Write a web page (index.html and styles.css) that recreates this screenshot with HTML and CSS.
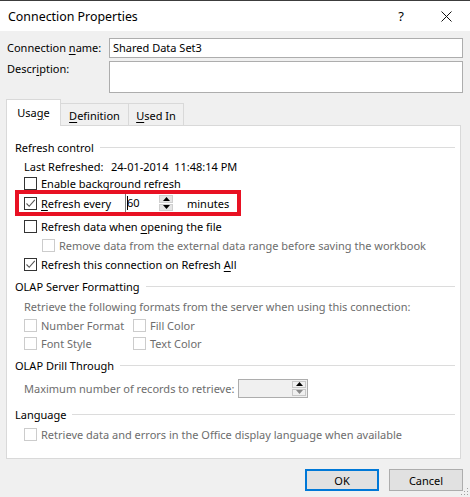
FILE: index.html
```html
<!DOCTYPE html>
<html>
<head>
<meta charset="utf-8">
<link rel="stylesheet" href="styles.css">
</head>
<body>
<div class="window">
  <div class="titlebar">
    <div class="title">Connection Properties</div>
    <div class="tb-btn help">?</div>
    <div class="tb-btn close">
      <svg width="11" height="11" viewBox="0 0 11 11"><path d="M0.5 0.5 L10.5 10.5 M10.5 0.5 L0.5 10.5" stroke="#111" stroke-width="1" fill="none"/></svg>
    </div>
  </div>
  <div class="content">
    <div class="field-row">
      <label class="field-label">Connection <u>n</u>ame:</label>
      <div class="input">Shared Data Set3</div>
    </div>
    <div class="field-row desc-row">
      <label class="field-label">Descr<u>i</u>ption:</label>
      <div class="input textarea"></div>
    </div>

    <div class="tabs">
      <div class="tab active">Usa<u>g</u>e</div>
      <div class="tab tab-def"><u>D</u>efinition</div>
      <div class="tab tab-used"><u>U</u>sed In</div>
    </div>
    <div class="panel">
      <div class="legend">Refresh control<span class="rule"></span></div>
      <div class="row indent r-last">
        <span class="last-label">Last Refreshed:</span><span>24-01-2014&nbsp; 11:48:14 PM</span>
      </div>
      <div class="row indent r-enable">
        <span class="cb"></span><span>Enable back<u>g</u>round refresh</span>
      </div>
      <div class="redbox">
        <span class="cb checked"><svg width="11" height="11" viewBox="0 0 11 11"><path d="M1.5 5.5 L4.2 8.3 L9.8 1.8" stroke="#555" stroke-width="1.1" fill="none"/></svg></span>
        <span class="every-label"><u>R</u>efresh every</span>
        <span class="spin">
          <span class="spin-input"><span class="caret"></span>60</span>
          <span class="spin-btns">
            <span class="sb up"><svg width="7" height="4" viewBox="0 0 7 4"><path d="M0 4 L3.5 0 L7 4Z" fill="#000"/></svg></span>
            <span class="sb down"><svg width="7" height="4" viewBox="0 0 7 4"><path d="M0 0 L3.5 4 L7 0Z" fill="#000"/></svg></span>
          </span>
        </span>
        <span class="minutes">minutes</span>
      </div>
      <div class="row indent r-open">
        <span class="cb"></span><span>Refresh data when <u>o</u>pening the file</span>
      </div>
      <div class="row indent2 r-remove disabled">
        <span class="cb dis"></span><span>Remove data from the external data range before saving the workbook</span>
      </div>
      <div class="row indent r-all">
        <span class="cb checked"><svg width="11" height="11" viewBox="0 0 11 11"><path d="M1.5 5.5 L4.2 8.3 L9.8 1.8" stroke="#555" stroke-width="1.1" fill="none"/></svg></span><span>Refresh this connection on Refresh <u>A</u>ll</span>
      </div>

      <div class="legend l-olap">OLAP Server Formatting<span class="rule"></span></div>
      <div class="row indent r-retrieve disabled">Retrieve the following formats from the server when using this connection:</div>
      <div class="fmt-grid disabled">
        <div class="fmt"><span class="cb dis"></span><span>Number Format</span></div>
        <div class="fmt"><span class="cb dis"></span><span>Fill Color</span></div>
        <div class="fmt"><span class="cb dis"></span><span>Font Style</span></div>
        <div class="fmt"><span class="cb dis"></span><span>Text Color</span></div>
      </div>

      <div class="legend l-drill">OLAP Drill Through<span class="rule"></span></div>
      <div class="row indent r-max disabled">
        <span class="max-label">Maximum number of records to retrieve:</span>
        <span class="spin spin-dis">
          <span class="spin-input"></span>
          <span class="spin-btns">
            <span class="sb up"><svg width="7" height="4" viewBox="0 0 7 4"><path d="M0 4 L3.5 0 L7 4Z" fill="#000"/></svg></span>
            <span class="sb down"><svg width="7" height="4" viewBox="0 0 7 4"><path d="M0 0 L3.5 4 L7 0Z" fill="#8a8a8a"/></svg></span>
          </span>
        </span>
      </div>

      <div class="legend l-lang">Language<span class="rule"></span></div>
      <div class="row indent r-lang disabled">
        <span class="cb dis"></span><span>Retrieve data and errors in the Office display language when available</span>
      </div>
    </div>

    <div class="buttons">
      <div class="btn default">OK</div>
      <div class="btn">Cancel</div>
    </div>
  </div>
  <svg class="grip" width="12" height="12" viewBox="0 0 12 12">
    <rect x="9" y="3" width="1" height="1" fill="#a0a0a0"/>
    <rect x="6" y="6" width="1" height="1" fill="#a0a0a0"/>
    <rect x="9" y="6" width="1" height="1" fill="#a0a0a0"/>
    <rect x="3" y="9" width="1" height="1" fill="#a0a0a0"/>
    <rect x="6" y="9" width="1" height="1" fill="#a0a0a0"/>
    <rect x="9" y="9" width="1" height="1" fill="#a0a0a0"/>
  </svg>
</div>
</body>
</html>
```

FILE: styles.css
```css
* { box-sizing: border-box; }
html, body { margin: 0; padding: 0; }
body {
  background: #f0f0f0;
  font-family: "Noto Sans", "Open Sans", sans-serif;
  font-size: 11px;
  color: #000;
}
u { text-decoration: underline; text-underline-offset: 2px; }

.window {
  position: relative;
  width: 470px;
  height: 497px;
  background: #f0f0f0;
  overflow: hidden;
  display: flex;
  flex-direction: column;
}

.titlebar {
  height: 31px;
  flex: none;
  background: #fff;
  border-top: 1px solid #3c3c3c;
  display: flex;
  align-items: center;
  padding-left: 8px;
  padding-right: 9px;
}
.title { flex: 1; font-size: 12.4px; }
.tb-btn {
  width: 30px;
  height: 30px;
  display: flex;
  align-items: center;
  justify-content: center;
}
.help { font-size: 13px; margin-right: 15px; }

.content {
  flex: 1;
  display: flex;
  flex-direction: column;
  padding: 7px 7px 0 6px;
}

.field-row { display: flex; align-items: flex-start; }
.field-label { width: 103px; flex: none; padding-left: 1px; line-height: 20px; }
.input {
  flex: 1;
  height: 20px;
  background: #fff;
  border: 1px solid #adadad;
  padding-left: 3px;
  line-height: 18px;
}
.desc-row { margin-top: 3px; }
.desc-row .field-label { line-height: 16px; }
.textarea { height: 32px; }

.tabs {
  margin-top: 6px;
  height: 27px;
  display: flex;
  align-items: flex-end;
}
.tab {
  height: 22px;
  margin-bottom: 1px;
  border: 1px solid #d9d9d9;
  border-bottom: none;
  background: #f0f0f0;
  display: flex;
  align-items: center;
  justify-content: center;
}
.tab.active {
  width: 55px;
  height: 27px;
  margin-bottom: 0;
  background: #fff;
  position: relative;
  z-index: 1;
  padding-bottom: 2px;
}
.tab-def { width: 68px; border-left: none; padding-top: 1px; }
.tab-used { width: 55px; border-left: none; padding-top: 1px; }

.panel {
  margin-top: -1px;
  width: 455px;
  height: 334px;
  background: #fff;
  border: 1px solid #d9d9d9;
  padding: 11px 5px 0 8px;
  display: flex;
  flex-direction: column;
}

.legend {
  height: 20px;
  flex: none;
  display: flex;
  align-items: center;
}
.rule { flex: 1; height: 1px; background: #dcdcdc; margin-left: 6px; }
.l-olap { margin-top: 2px; }
.l-drill { margin-top: 2px; }
.l-lang { margin-top: 5px; }

.row { display: flex; align-items: center; flex: none; white-space: nowrap; }
.indent { padding-left: 9px; }
.indent2 { padding-left: 27px; }
.disabled { color: #6d6d6d; }

.r-last { height: 19px; }
.last-label { width: 87px; flex: none; }
.r-enable { height: 14px; }
.r-open { height: 20px; }
.r-remove { height: 19px; }
.r-all { height: 19px; }
.r-retrieve { height: 20px; }
.r-max { height: 22px; margin-top: 2px; }
.r-lang { height: 20px; }

.cb {
  width: 13px;
  height: 13px;
  flex: none;
  border: 1px solid #333;
  background: #fff;
  margin-right: 4px;
  display: flex;
  align-items: center;
  justify-content: center;
}
.cb.dis { border-color: #cccccc; }

.redbox {
  flex: none;
  width: 226px;
  height: 26px;
  border: 4px solid #e81123;
  display: flex;
  align-items: center;
  padding-left: 5px;
  white-space: nowrap;
}
.every-label { width: 84px; flex: none; }
.spin {
  display: flex;
  flex: none;
  height: 18px;
  width: 49px;
  border-left: 1px solid #7a7a7a;
  background: #fff;
}
.spin-input { flex: 1; padding-left: 1px; line-height: 18px; position: relative; }
.caret {
  position: absolute;
  left: 1px;
  top: 2px;
  height: 14px;
  border-left: 1px solid #000;
}
.spin-btns {
  width: 14px;
  display: flex;
  flex-direction: column;
  gap: 1px;
  margin-right: 1px;
  padding: 1px 0;
}
.sb {
  flex: 1;
  background: #e5e5e5;
  border: 1px solid #cfcfcf;
  display: flex;
  align-items: center;
  justify-content: center;
}
.minutes { margin-left: 13px; }

.fmt-grid {
  padding-left: 9px;
  display: grid;
  grid-template-columns: 109px auto;
  grid-auto-rows: 18.5px;
  flex: none;
}
.fmt { display: flex; align-items: center; }

.max-label { width: 214px; flex: none; }
.spin-dis {
  width: 70px;
  height: 19px;
  border: 1px solid #adadad;
  background: #f0f0f0;
}
.spin-dis .spin-input { background: #f0f0f0; }
.spin-dis .spin-btns { padding: 1px 0; margin-right: 1px; }
.spin-dis .sb { background: #f0f0f0; border-color: #c8c8c8; }

.buttons {
  margin-top: 10px;
  display: flex;
  justify-content: flex-end;
  gap: 10px;
}
.btn {
  width: 74px;
  height: 22px;
  background: #e1e1e1;
  border: 1px solid #adadad;
  display: flex;
  align-items: center;
  justify-content: center;
}
.btn.default { border: 2px solid #0078d7; }

.grip { position: absolute; right: 0; bottom: 0; }
```
